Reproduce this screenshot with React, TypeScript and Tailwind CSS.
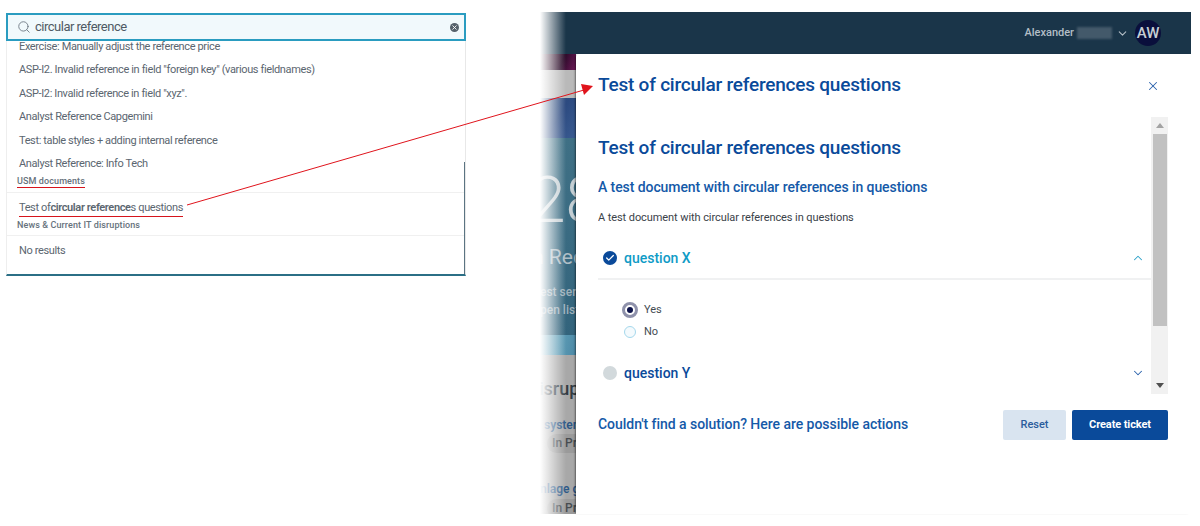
import React from "react";
import { ChevronDown, ChevronUp, Search, X, Check } from "lucide-react";

const results = [
  "ASP-I2. Invalid reference in field \"foreign key\" (various fieldnames)",
  "ASP-I2: Invalid reference in field \"xyz\".",
  "Analyst Reference Capgemini",
  "Test: table styles + adding internal reference",
  "Analyst Reference: Info Tech",
];

function SearchPanel() {
  return (
    <div className="w-[460px] ml-[6px] mt-[13px] shrink-0 h-[263px] flex flex-col text-[11px] tracking-[-0.37px] text-[#5b6670]">
      {/* Search input */}
      <div className="relative z-10 h-[28px] shrink-0 flex items-center bg-[#f1f9fc] border-2 border-[#2a9cc0] pl-[9px] pr-[5px]">
        <Search className="w-[14px] h-[14px] text-[#6b7680]" strokeWidth={1.5} />
        <span className="ml-[4px] text-[13px] text-[#4f5a64] tracking-[-0.5px]">circular reference</span>
        <span className="ml-auto w-[9px] h-[9px] rounded-full bg-[#56626c] flex items-center justify-center">
          <X className="w-[7px] h-[7px] text-white" strokeWidth={3} />
        </span>
      </div>

      {/* Result list */}
      <div className="relative flex-1 overflow-hidden border-l border-l-[#eeeeee] border-r border-r-[#e8e8e8] border-b-2 border-b-[#2b6f86]">
        <div className="absolute right-[-1px] top-[121px] bottom-0 w-[2px] bg-[#5b7482]" />
        <div className="pl-[12px] h-[10px] relative">
          <span className="absolute top-[-1px] left-[12px] leading-[14px] whitespace-nowrap">Exercise: Manually adjust the reference price</span>
        </div>
        <div className="pl-[12px] flex flex-col mt-[11px]">
          {results.map((title) => (
            <div key={title} className="h-[23.6px] leading-[16px] whitespace-nowrap">{title}</div>
          ))}
        </div>
        <div className="-mt-[5px] pl-[10px] h-[15px] text-[9px] font-medium tracking-[0.1px] leading-[12px] text-[#66727c]">
          <span className="relative inline-block">
            USM documents
            <span className="absolute left-0 right-0 top-[12px] h-[1px] bg-[#d6141c]" />
          </span>
        </div>
        <div className="border-t border-[#f0f0f0] mt-[2px] pt-[8px] pl-[12px] leading-[14px]">
          <span className="relative inline-block">
            Test of<span className="font-semibold">circular reference</span>s questions
            <span className="absolute left-0 right-0 top-[15px] h-[1px] bg-[#d6141c]" />
          </span>
        </div>
        <div className="pl-[10px] mt-[4px] text-[9px] font-medium tracking-[0.1px] leading-[12px] text-[#66727c]">News &amp; Current IT disruptions</div>
        <div className="border-t border-[#f0f0f0] mt-[4px] pt-[8px] pl-[12px] leading-[14px]">No results</div>
      </div>
    </div>
  );
}

function BackgroundStrip() {
  return (
    <div className="w-[36px] shrink-0 flex flex-col overflow-hidden whitespace-nowrap">
      <div className="h-[16px] shrink-0 bg-[linear-gradient(110deg,#3a1a30,#2a0a28_60%,#701a5a)]" />
      <div className="h-[28px] shrink-0 bg-[#b9b9b9]" />
      <div className="h-[40px] shrink-0 bg-[linear-gradient(120deg,#33527f,#2c4a80,#3a5c92)]" />
      <div className="h-[197px] shrink-0 bg-[linear-gradient(180deg,#3f7085,#3a6b82_50%,#33647c)] overflow-hidden text-[#c4ced3]">
        <div className="mt-[28px] h-[70px] text-[64px] font-light leading-[70px] -ml-[10px]">28</div>
        <div className="mt-[8px] h-[26px] text-[21px] leading-[26px] -ml-[8px] text-[#aebdc5]">n Requests</div>
        <div className="mt-[13px] h-[18px] text-[12px] font-medium leading-[18px] text-[#9fb0ba]">est service</div>
        <div className="h-[18px] text-[12px] font-medium leading-[18px] text-[#9fb0ba]">pen list</div>
      </div>
      <div className="h-[20px] shrink-0 bg-[linear-gradient(100deg,#6da6bb,#5e9db6_50%,#4c89a6)]" />
      <div className="flex-1 min-h-0 overflow-hidden bg-[#a8a8a8] text-[#333b42]">
        <div className="mt-[22px] h-[24px] text-[18px] font-medium leading-[24px] -ml-[1px]">isrup</div>
        <div className="mt-[16px] ml-[4px] h-[16px] text-[12px] font-semibold leading-[16px] text-[#2c5786]">system</div>
        <div className="mt-[1px] ml-[7px] h-[19px] w-[40px] rounded-full bg-[#9a9a9a] pl-[5px] text-[12px] font-medium leading-[19px] text-[#474c50]">In Progress</div>
        <div className="mt-[28px] h-[16px] text-[12px] font-semibold leading-[16px] text-[#2c5786]">nlage ge</div>
        <div className="mt-[2px] ml-[7px] h-[19px] w-[40px] rounded-full bg-[#9a9a9a] pl-[5px] text-[12px] font-medium leading-[19px] text-[#474c50]">In Progress</div>
      </div>
    </div>
  );
}

function Scrollbar() {
  return (
    <div className="w-[17px] shrink-0 bg-[#f1f1f1] flex flex-col items-center">
      <div className="h-[17px] flex items-center justify-center">
        <div className="w-0 h-0 border-x-[4px] border-x-transparent border-b-[5px] border-b-[#a3a3a3]" />
      </div>
      <div className="w-[14px] h-[192px] bg-[#c1c1c1]" />
      <div className="mt-auto h-[17px] flex items-center justify-center">
        <div className="w-0 h-0 border-x-[4px] border-x-transparent border-t-[5px] border-t-[#505050]" />
      </div>
    </div>
  );
}

function Modal() {
  return (
    <div className="flex-1 bg-white rounded-tl-[3px] pl-[22px] pr-[23px] flex flex-col shadow-[-2px_0_2px_-1px_rgba(0,0,0,0.45)]">
      <div className="h-[63px] shrink-0 flex items-center justify-between">
        <h2 className="-mt-[1px] text-[19px] tracking-[-0.22px] font-medium text-[#0a4a9a] leading-[24px]">Test of circular references questions</h2>
        <X className="w-[14px] h-[14px] text-[#2a62ac] mr-[8px]" strokeWidth={1.75} />
      </div>

      <div className="h-[277px] shrink-0 flex">
        <div className="flex-1 overflow-hidden">
          <h3 className="mt-[19px] text-[19px] tracking-[-0.22px] font-medium text-[#0a4a9a] leading-[24px]">Test of circular references questions</h3>
          <h4 className="mt-[17px] text-[14px] tracking-[-0.08px] font-medium text-[#1459a8] leading-[20px]">A test document with circular references in questions</h4>
          <p className="mt-[13px] text-[11px] tracking-[-0.08px] text-[#3a4249] leading-[16px]">A test document with circular references in questions</p>

          <div className="mt-[17px] h-[37px] border-b-2 border-[#f0f1f2] flex items-start pl-[5px] pr-[6px] pt-[8px]">
            <span className="w-[14px] h-[14px] rounded-full bg-[#0a4a9a] flex items-center justify-center">
              <Check className="w-[10px] h-[10px] text-white" strokeWidth={3} />
            </span>
            <span className="ml-[7px] -mt-[1px] text-[14px] font-medium leading-[16px] text-[#0f9bc6]">question X</span>
            <ChevronUp className="ml-auto w-[14px] h-[14px] text-[#2aa0c8]" strokeWidth={1.75} />
          </div>

          <div className="mt-[22px] pl-[24px] flex flex-col gap-[6px] text-[11px] leading-[16px] text-[#444c52]">
            <label className="flex items-center gap-[6px]">
              <span className="w-[16px] h-[16px] rounded-full border-[3px] border-[#8f92ab] bg-white flex items-center justify-center">
                <span className="w-[6px] h-[6px] rounded-full bg-[#0b1248]" />
              </span>
              Yes
            </label>
            <label className="flex items-center gap-[6px]">
              <span className="mx-[2px] w-[12px] h-[12px] rounded-full border border-[#a5d8ec] bg-[#f4fafd]" />
              No
            </label>
          </div>

          <div className="mt-[25px] flex items-center pl-[5px] pr-[6px]">
            <span className="w-[14px] h-[14px] rounded-full bg-[#d2d9dc]" />
            <span className="ml-[7px] text-[14px] font-medium leading-[16px] text-[#0a4a9a]">question Y</span>
            <ChevronDown className="ml-auto w-[14px] h-[14px] text-[#2a62ac]" strokeWidth={1.75} />
          </div>
        </div>
        <Scrollbar />
      </div>

      <div className="mt-[16px] flex items-center">
        <span className="-mt-[2px] text-[14px] font-medium text-[#1459a8] leading-[20px] tracking-[-0.04px]">Couldn&apos;t find a solution? Here are possible actions</span>
        <button className="ml-auto w-[63px] h-[30px] rounded-[2px] bg-[#d9e4f0] text-[11px] font-medium text-[#2a5c9c]">Reset</button>
        <button className="ml-[6px] w-[96px] h-[30px] rounded-[2px] bg-[#0a4a9a] text-[11px] tracking-[-0.1px] font-bold text-white">Create ticket</button>
      </div>
    </div>
  );
}

function AppWindow() {
  return (
    <div className="relative ml-[74px] mt-[12px] w-[651px] h-[502px] shrink-0 flex flex-col">
      <div className="h-[42px] shrink-0 bg-[#1a3549] flex items-center justify-end pr-[30px] text-[#b3bec6]">
        <span className="text-[11px] font-medium">Alexander</span>
        <span className="ml-[3px] w-[35px] h-[12px] bg-[#43596a] blur-[1px]" />
        <ChevronDown className="ml-[4px] w-[13px] h-[13px]" strokeWidth={2} />
        <span className="ml-[6px] w-[26px] h-[26px] rounded-full bg-[#0a0f3c] text-[15px] font-medium flex items-center justify-center text-[#c6ced4]">AW</span>
      </div>
      <div className="flex-1 flex min-h-0">
        <BackgroundStrip />
        <Modal />
      </div>
      {/* Cropped edge of the screenshot fades out to white */}
      <div className="absolute left-0 top-0 bottom-0 w-[26px] bg-gradient-to-r from-white to-transparent" />
    </div>
  );
}

export default function App() {
  return (
    <div className="relative w-[1200px] h-[526px] bg-white overflow-hidden flex items-start font-['Roboto',sans-serif]">
      <SearchPanel />
      <AppWindow />
      {/* Red annotation arrow */}
      <svg className="absolute inset-0 pointer-events-none" width="1200" height="526">
        <line x1="187" y1="205" x2="584" y2="90" stroke="#e0141c" strokeWidth="1" />
        <polygon points="593,86 581,84 584,95" fill="#e0141c" />
      </svg>
    </div>
  );
}
